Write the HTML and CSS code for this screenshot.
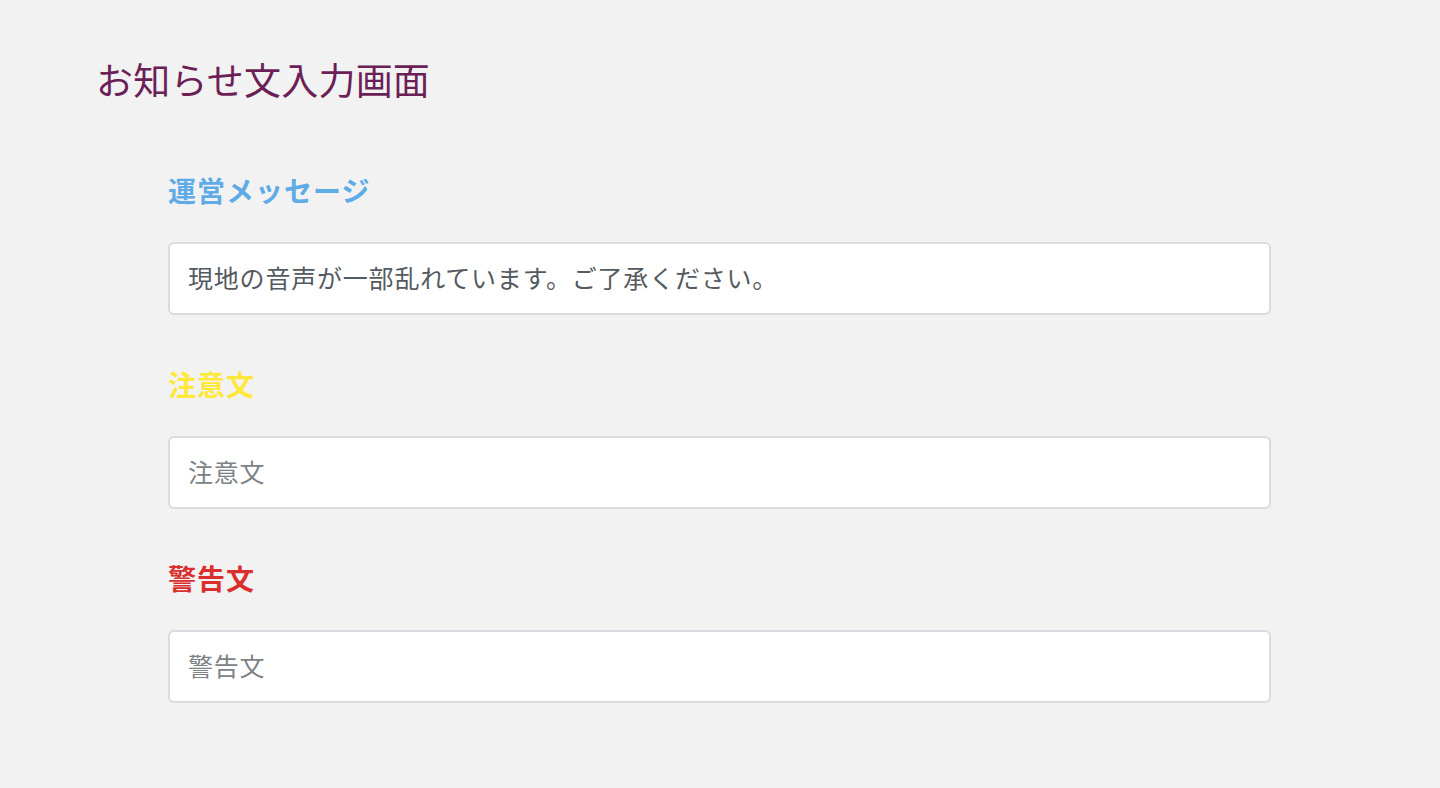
FILE: index.html
```html
<!DOCTYPE html>
<html lang="ja">
<head>
<meta charset="utf-8">
<title>お知らせ文入力画面</title>
<link rel="stylesheet" href="styles.css">
</head>
<body>
<div class="page">
  <h1 class="title">お知らせ文入力画面</h1>
  <form class="form">
    <div class="group">
      <label class="label label-info" for="m1">運営メッセージ</label>
      <input class="field" id="m1" type="text" value="現地の音声が一部乱れています。ご了承ください。">
    </div>
    <div class="group">
      <label class="label label-warn" for="m2">注意文</label>
      <input class="field" id="m2" type="text" placeholder="注意文">
    </div>
    <div class="group">
      <label class="label label-danger" for="m3">警告文</label>
      <input class="field" id="m3" type="text" placeholder="警告文">
    </div>
  </form>
</div>
</body>
</html>
```

FILE: styles.css
```css
html, body {
  margin: 0;
  padding: 0;
  background: #f2f2f2;
}
body {
  font-family: "Noto Sans CJK JP", "Noto Sans", sans-serif;
}
.page {
  padding: 54px 0 0 96px;
}
.title {
  margin: 0;
  font-size: 37px;
  line-height: 50px;
  font-weight: 400;
  color: #6c1f56;
  letter-spacing: 0.2px;
}
.form {
  margin: 66px 0 0 72px;
  width: 1103px;
  display: flex;
  flex-direction: column;
  gap: 49px;
}
.group {
  display: flex;
  flex-direction: column;
}
.label {
  font-size: 28px;
  line-height: 40px;
  font-weight: 700;
  margin-bottom: 32px;
  letter-spacing: 1px;
}
.label-info { color: #5fabe6; }
.label-warn { color: #ffe83a; }
.label-danger { color: #d9302e; }
.field {
  box-sizing: border-box;
  width: 100%;
  height: 73px;
  margin: 0;
  padding: 0 18px 4px;
  border: 2px solid #d8dbe0;
  border-radius: 6px;
  background: #fff;
  font-family: "Noto Sans CJK JP", "Noto Sans", sans-serif;
  font-size: 25px;
  letter-spacing: 0.8px;
  color: #555a60;
  outline: none;
}
.field::placeholder {
  color: #7d8287;
  opacity: 1;
}
```
